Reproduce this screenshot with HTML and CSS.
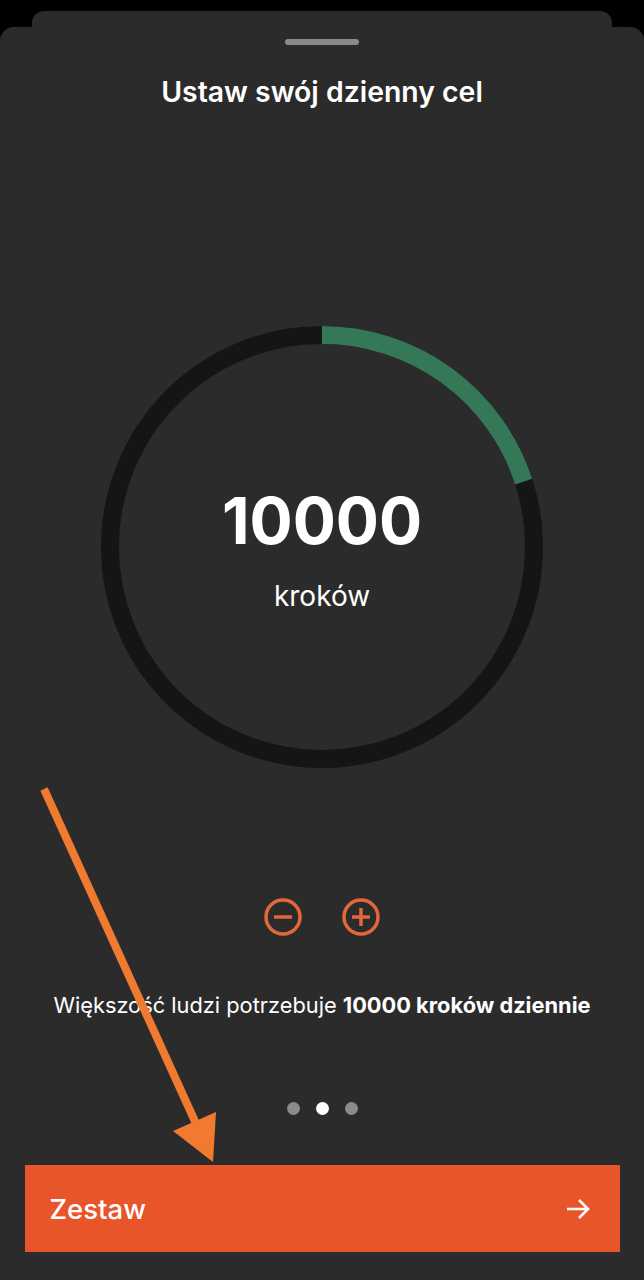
FILE: index.html
```html
<!DOCTYPE html>
<html lang="pl">
<head>
    <meta charset="UTF-8">
    <meta name="viewport" content="width=device-width, initial-scale=1.0">
    <title>Ustaw swój dzienny cel</title>
    <link rel="stylesheet" href="styles.css">
</head>
<body>
    <div class="sheet-back"></div>
    <div class="sheet">
        <div class="handle"></div>
        <h2 class="title">Ustaw swój dzienny cel</h2>

        <div class="ring">
            <svg class="ring-svg" width="442" height="442" viewBox="0 0 442 442">
                <circle cx="221" cy="221" r="212" fill="none" stroke="#151515" stroke-width="18"/>
                <circle cx="221" cy="221" r="212" fill="none" stroke="#357858" stroke-width="18"
                        stroke-dasharray="266.4 1332" transform="rotate(-90 221 221)"/>
            </svg>
            <div class="ring-text">
                <div class="steps">10000</div>
                <div class="unit">kroków</div>
            </div>
        </div>

        <div class="controls">
            <button class="round-btn" aria-label="Mniej">
                <svg width="38" height="38" viewBox="0 0 38 38">
                    <circle cx="19" cy="19" r="17" fill="none" stroke="#e4673a" stroke-width="3.5"/>
                    <line x1="10" y1="19" x2="28" y2="19" stroke="#e4673a" stroke-width="3.5"/>
                </svg>
            </button>
            <button class="round-btn" aria-label="Więcej">
                <svg width="38" height="38" viewBox="0 0 38 38">
                    <circle cx="19" cy="19" r="17" fill="none" stroke="#e4673a" stroke-width="3.5"/>
                    <line x1="10" y1="19" x2="28" y2="19" stroke="#e4673a" stroke-width="3.5"/>
                    <line x1="19" y1="10" x2="19" y2="28" stroke="#e4673a" stroke-width="3.5"/>
                </svg>
            </button>
        </div>

        <p class="hint">Większość ludzi potrzebuje <strong>10000 kroków dziennie</strong></p>

        <div class="dots">
            <span class="dot"></span>
            <span class="dot active"></span>
            <span class="dot"></span>
        </div>

        <button class="submit">
            <span>Zestaw</span>
            <svg width="24" height="24" viewBox="0 0 24 24">
                <path d="M1 12 H22 M13 3 L22 12 L13 21" fill="none" stroke="#fff" stroke-width="2.6"/>
            </svg>
        </button>
    </div>

    <svg class="pointer" width="644" height="1280" viewBox="0 0 644 1280">
        <line x1="44" y1="789" x2="198" y2="1128" stroke="#f07a30" stroke-width="8"/>
        <polygon points="173,1131 216,1112 213,1162" fill="#f07a30"/>
    </svg>
</body>
</html>
```

FILE: styles.css
```css
html, body {
    margin: 0;
    padding: 0;
}
body {
    position: relative;
    height: 1280px;
    overflow: hidden;
    background: #000;
    font-family: Inter, "Noto Sans", sans-serif;
    color: #fff;
}
.sheet-back {
    margin: 11px 32px 0;
    height: 16px;
    background: #2b2b2b;
    border-radius: 12px 12px 0 0;
}
.sheet {
    height: 1253px;
    background: #2b2b2b;
    border-radius: 14px 14px 0 0;
    display: flex;
    flex-direction: column;
    align-items: center;
}
.handle {
    margin-top: 12px;
    width: 74px;
    height: 6px;
    border-radius: 3px;
    background: #8a8a8a;
}
.title {
    margin: 30px 0 0;
    font-size: 28.4px;
    line-height: 34px;
    font-weight: 600;
}
.ring {
    margin-top: 217px;
    width: 442px;
    height: 442px;
    display: grid;
}
.ring-svg, .ring-text {
    grid-area: 1 / 1;
}
.ring-text {
    display: flex;
    flex-direction: column;
    align-items: center;
    justify-content: center;
    padding-top: 5px;
}
.steps {
    font-size: 64px;
    line-height: 70px;
    font-weight: 700;
}
.unit {
    margin-top: 23px;
    font-size: 28px;
    line-height: 34px;
    font-weight: 400;
}
.controls {
    margin-top: 130px;
    display: flex;
    gap: 40px;
}
.round-btn {
    width: 38px;
    height: 38px;
    padding: 0;
    border: none;
    background: none;
    display: block;
}
.round-btn svg {
    display: block;
}
.hint {
    margin: 56px 0 0;
    font-size: 21.8px;
    line-height: 26px;
}
.hint strong {
    font-weight: 700;
}
.dots {
    margin-top: 84px;
    display: flex;
    gap: 16px;
}
.dot {
    width: 13px;
    height: 13px;
    border-radius: 50%;
    background: #8a8a8a;
}
.dot.active {
    background: #fff;
}
.submit {
    margin-top: 50px;
    width: 595px;
    height: 87px;
    padding: 0 30px 0 25px;
    border: none;
    background: #e9552a;
    color: #fff;
    font-family: Inter, "Noto Sans", sans-serif;
    font-size: 27.5px;
    font-weight: 500;
    display: flex;
    align-items: center;
    justify-content: space-between;
}
.submit svg {
    display: block;
}
.pointer {
    position: absolute;
    top: 0;
    left: 0;
    pointer-events: none;
}
```
